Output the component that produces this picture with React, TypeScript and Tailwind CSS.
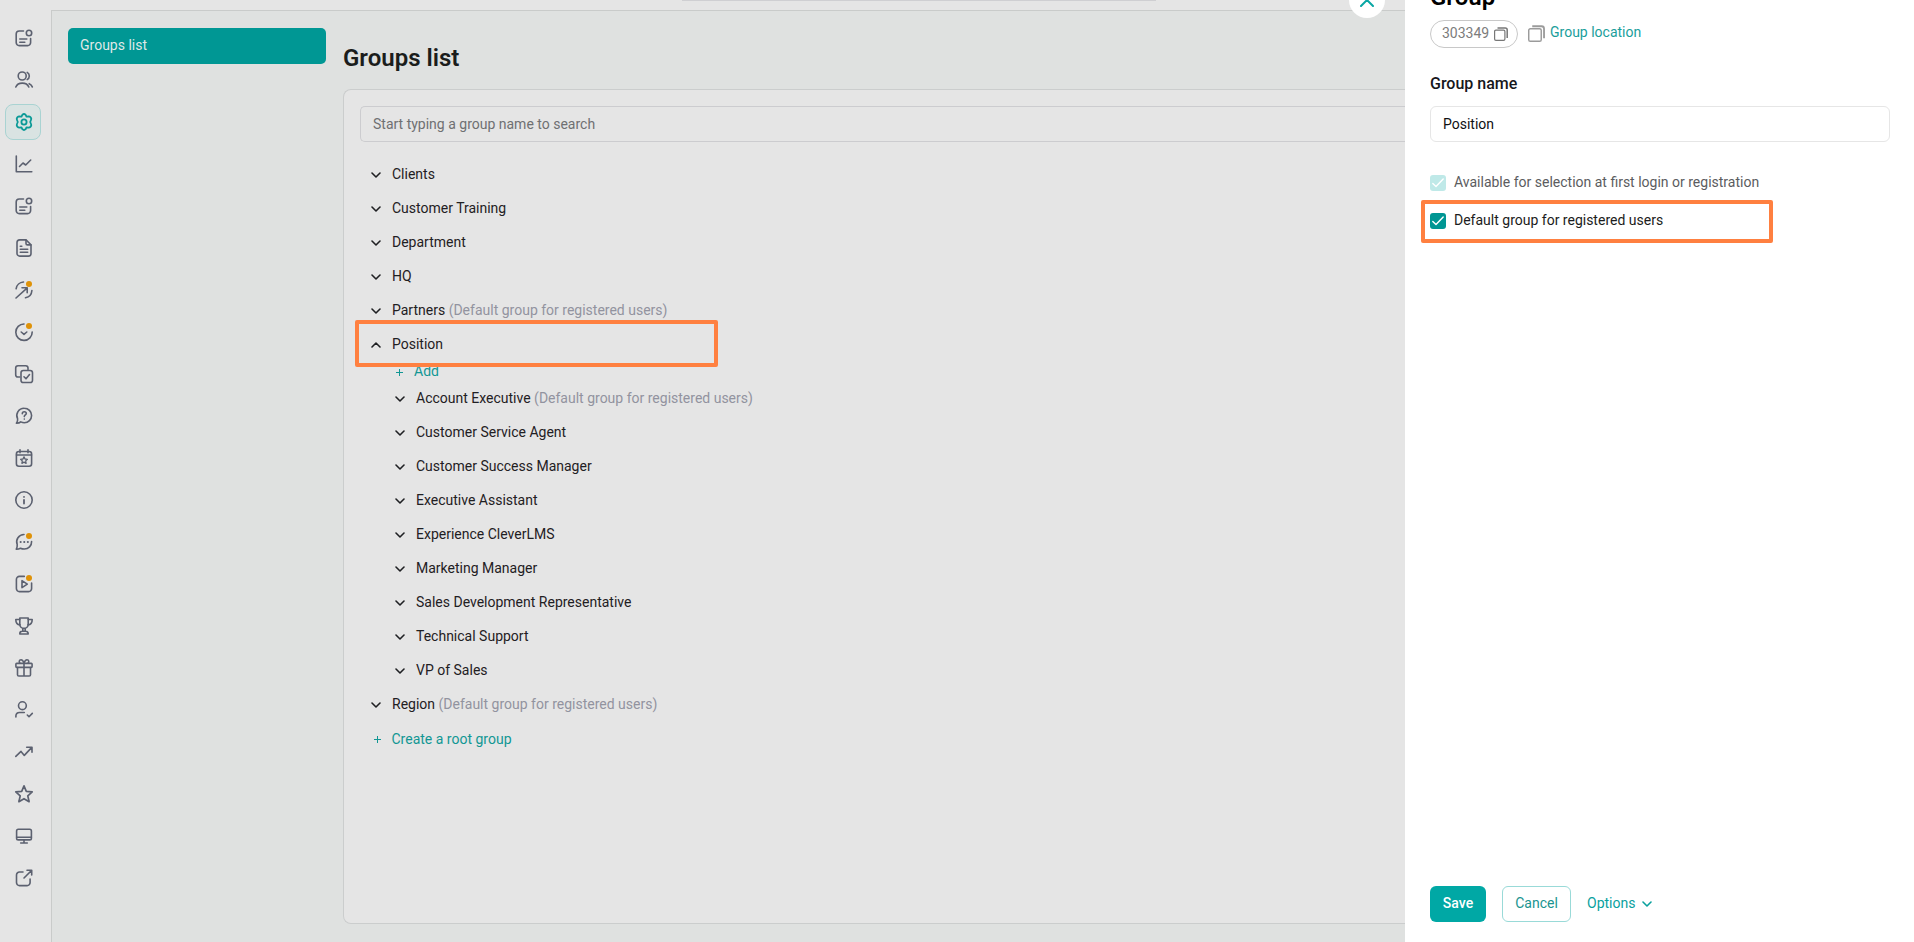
import React from "react";

type IconProps = { children: React.ReactNode; dot?: boolean };

function Icon({ children, dot }: IconProps) {
  return (
    <svg
      width="18"
      height="18"
      viewBox="0 0 18 18"
      fill="none"
      stroke="currentColor"
      strokeWidth="1.6"
      strokeLinecap="round"
      strokeLinejoin="round"
      className="overflow-visible"
    >
      {children}
      {dot && <circle cx="14" cy="3" r="3" fill="#df9208" stroke="none" />}
    </svg>
  );
}

const NoteIcon = () => (
  <Icon>
    <path d="M8.500 2H4.200A3 3 0 0 0 1.200 5v8.600a3 3 0 0 0 3 3h8.400a3 3 0 0 0 3-3V9.500" />
    <circle cx="14" cy="4" r="2.700" />
    <path d="M4.800 10h7M4.800 13.200h5" />
  </Icon>
);

const UsersIcon = () => (
  <Icon>
    <circle cx="7.200" cy="5" r="4" />
    <path d="M12.200 1.400c2.800 1.600 2.800 5.600 0 7.200" />
    <path d="M.8 16c1-2.400 3.600-3.900 6.500-3.900s5.500 1.500 6.500 3.900" />
    <path d="M14.200 12.700c1.400.6 2.500 1.700 3.100 3.200" />
  </Icon>
);

const GearIcon = () => (
  <Icon>
    <path
      strokeWidth="1.800"
      d="M7.300 1.800Q9 .3 10.700 1.800L11.500 3.600 13.600 3.400Q16 3.600 16.300 5.800 16.300 6.500 15.200 9 16.300 11.500 16.300 12.200 16 14.400 13.600 14.600L11.500 14.400 10.700 16.200Q9 17.700 7.300 16.200L6.500 14.400 4.400 14.600Q2 14.400 1.700 12.200 1.700 11.500 2.800 9 1.700 6.500 1.700 5.800 2 3.600 4.400 3.400L6.500 3.600Z"
    />
    <circle cx="9" cy="9" r="2.600" strokeWidth="1.800" />
  </Icon>
);

const ChartIcon = () => (
  <Icon>
    <path d="M1.300 1v15.700h15.500" />
    <path d="M4.500 11.500 8 8l2.700 2 5-5" />
  </Icon>
);

const DocumentIcon = () => (
  <Icon>
    <path d="M11 .9H4.700A2.700 2.700 0 0 0 2 3.600v10.800a2.700 2.700 0 0 0 2.700 2.700h8.600a2.700 2.700 0 0 0 2.700-2.700V5.800Z" />
    <path d="M11 1v3.400a1.500 1.500 0 0 0 1.500 1.500h3.400" />
    <path d="M5.300 7.200h1.500M5.300 10.200h7.400M5.300 13.300h7.400" />
  </Icon>
);

const TargetIcon = () => (
  <Icon dot>
    <path d="M1.100 7.800A8 8 0 0 1 8.500 1M16.900 9.500a8 8 0 0 1-6.400 7.300" />
    <path d="M1 17 12 7.200M7 6.800h5.200v5" />
  </Icon>
);

const CheckCircleIcon = () => (
  <Icon dot>
    <path d="M9 1a8.200 8.200 0 1 0 8.200 8" />
    <path d="M6.200 9 9 11.300 11.800 9" />
  </Icon>
);

const CopyCheckIcon = () => (
  <Icon>
    <path d="M4.700 12H3A2.300 2.300 0 0 1 .7 9.700V3A2.300 2.300 0 0 1 3 .7h7.700A2.300 2.300 0 0 1 13 3v1.500" />
    <rect x="6" y="5.500" width="11.500" height="12" rx="2.300" />
    <path d="m9 11.800 2 2 3.500-4.200" />
  </Icon>
);

const HelpIcon = () => (
  <Icon>
    <path d="M9.300 1.200a7.300 7.300 0 1 1 0 14.600c-1.600 0-2.500-.4-3.500-.9-1 .9-2.600 1.300-4.400 1.300 1-1.200 1.400-2.700 1.200-4.400A7.300 7.300 0 0 1 9.300 1.200Z" />
    <path d="M7.300 6.700c0-1.200.9-1.900 2-1.900s2 .7 2 1.800c0 1.300-2 1.500-2 3M9.300 12v.1" />
  </Icon>
);

const CalendarIcon = () => (
  <Icon>
    <rect x="1.400" y="2.500" width="15.200" height="14.700" rx="2.500" />
    <path d="M1.500 6h15M5 .8v3M13 .8v3" />
    <path
      strokeWidth="1.300"
      d="m9 7.900 1 2.100 2.400.3-1.700 1.600.4 2.400L9 13.200l-2.100 1.100.4-2.400-1.700-1.600L8 10Z"
    />
  </Icon>
);

const InfoIcon = () => (
  <Icon>
    <circle cx="9" cy="9" r="8.200" />
    <path d="M9 8.800v3.700M9 5.800v.1" strokeWidth="1.800" />
  </Icon>
);

const ChatIcon = () => (
  <Icon dot>
    <path d="M9 1.500A7.300 7.300 0 0 0 2.200 11.500c.2 1.800-.2 3.300-.9 4.700 1.800 0 3-.3 4.200-1 1 .5 2.200.8 3.800.8a7.200 7.200 0 0 0 7.300-7.500" />
    <path d="M5.600 9h.1M9.200 9h.1M12.800 9h.1" strokeWidth="2" />
  </Icon>
);

const VideoIcon = () => (
  <Icon dot>
    <path d="M9.300 1.400H4.400a3 3 0 0 0-3 3v9.200a3 3 0 0 0 3 3h9.200a3 3 0 0 0 3-3V8" />
    <path d="M7 5.700v7l5.300-3.500Z" />
  </Icon>
);

const TrophyIcon = () => (
  <Icon>
    <path d="M4.800 1h8.400v6.200a4.200 4.200 0 0 1-8.400 0Z" />
    <path d="M4.700 2.500H.8c0 3.600 1.200 5.200 4.200 5.400M13.300 2.500h3.900c0 3.600-1.200 5.200-4.200 5.400M7.800 11.500v2.700M10.200 11.500v2.700M4.800 17c0-1.900.8-2.800 2.400-2.800h3.600c1.600 0 2.400.9 2.400 2.800Z" />
  </Icon>
);

const GiftIcon = () => (
  <Icon>
    <rect x=".9" y="4.400" width="16.200" height="4" rx=".8" />
    <path d="M2.500 8.500v7.200c0 .8.500 1.300 1.300 1.300h10.400c.8 0 1.300-.5 1.300-1.300V8.500M9 4.400V17" />
    <path d="M9 4.200C8.300 2 7.300.8 6 .8 4 .8 3.600 3.500 5.200 4.200M9 4.200C9.700 2 10.700.8 12 .8c2 0 2.400 2.700.8 3.400" />
  </Icon>
);

const UserCheckIcon = () => (
  <Icon>
    <circle cx="7.400" cy="4.700" r="3.900" />
    <path d="M.9 16v-1.200a3.600 3.600 0 0 1 3.600-3.300h4.800" />
    <path d="m12.300 14 1.700 1.700 3.300-3.300" />
  </Icon>
);

const TrendIcon = () => (
  <Icon>
    <path d="m.8 13.400 5.200-5 3.300 4 7.500-8M11.700 4.200H17v5" />
  </Icon>
);

const StarIcon = () => (
  <Icon>
    <path
      strokeWidth="1.700"
      d="m9 .9 2.300 5.400 5.900.6-4.400 4 1.300 5.800L9 13.700l-5.100 3 1.300-5.800-4.400-4 5.900-.6Z"
    />
  </Icon>
);

const MonitorIcon = () => (
  <Icon>
    <rect x="1.600" y="2.300" width="14.800" height="10.600" rx="1.700" />
    <path d="M1.700 10.300h14.600M9 13v2.800M5.700 16h6.600" />
  </Icon>
);

const ExternalIcon = () => (
  <Icon>
    <path d="M8 3H4.500a3 3 0 0 0-3 3v7.600a3 3 0 0 0 3 3h7.600a3 3 0 0 0 3-3V10" />
    <path d="m9 9 7.500-7.500M12 1.200h4.700v4.700" />
  </Icon>
);

const navIcons = [
  NoteIcon, UsersIcon, GearIcon, ChartIcon, NoteIcon, DocumentIcon, TargetIcon,
  CheckCircleIcon, CopyCheckIcon, HelpIcon, CalendarIcon, InfoIcon, ChatIcon,
  VideoIcon, TrophyIcon, GiftIcon, UserCheckIcon, TrendIcon, StarIcon,
  MonitorIcon, ExternalIcon,
];

function Sidebar() {
  return (
    <nav className="flex w-[51px] shrink-0 flex-col gap-1.5 pt-5 pl-[5px] text-[#5c6170]">
      {navIcons.map((NavIcon, i) => (
        <div
          key={i}
          className={
            i === 2
              ? "flex h-9 w-9 items-center justify-center rounded-lg border border-[#a9d3d2] bg-[#d9e3e2] pl-0.5 text-[#0b9a97]"
              : "flex h-9 w-9 items-center justify-center pl-0.5"
          }
        >
          <NavIcon />
        </div>
      ))}
    </nav>
  );
}

function Chevron({ up }: { up?: boolean }) {
  return (
    <svg width="10" height="6" viewBox="0 0 10 6" fill="none" stroke="currentColor" strokeWidth="1.600" strokeLinecap="round" strokeLinejoin="round">
      <path d={up ? "m1 5 4-4 4 4" : "m1 1 4 4 4-4"} />
    </svg>
  );
}

function Plus() {
  return (
    <svg width="7" height="7" viewBox="0 0 7 7" stroke="currentColor" strokeWidth="1">
      <path d="M3.500 0v7M0 3.500h7" />
    </svg>
  );
}

function Stack({ size, className }: { size: number; className: string }) {
  return (
    <svg width={size} height={size} viewBox="0 0 14 14" fill="none" stroke="currentColor" className={className}>
      <rect x=".6" y="3.100" width="10.300" height="10.300" rx="1.300" strokeWidth="1.200" />
      <path d="M3.500 1h7.700A2 2 0 0 1 13.200 3v8" strokeWidth="1.500" />
    </svg>
  );
}

type Group = { name: string; isDefault?: boolean; open?: boolean };

function GroupRow({ name, isDefault, open }: Group) {
  return (
    <div className="flex h-[34px] items-center text-sm text-[#1f2023]">
      <span className="flex w-[21px] pt-0.5">
        <Chevron up={open} />
      </span>
      <span>
        {name}
        {isDefault && <span className="text-[#92939f]"> (Default group for registered users)</span>}
      </span>
    </div>
  );
}

const before: Group[] = [
  { name: "Clients" },
  { name: "Customer Training" },
  { name: "Department" },
  { name: "HQ" },
  { name: "Partners", isDefault: true },
];

const children: Group[] = [
  { name: "Account Executive", isDefault: true },
  { name: "Customer Service Agent" },
  { name: "Customer Success Manager" },
  { name: "Executive Assistant" },
  { name: "Experience CleverLMS" },
  { name: "Marketing Manager" },
  { name: "Sales Development Representative" },
  { name: "Technical Support" },
  { name: "VP of Sales" },
];

function GroupsCard() {
  return (
    <section className="mt-[21px] h-[835px] rounded-l-lg border border-r-0 border-[#cbcdcd] bg-[#e5e5e5] pt-4 pl-4">
      <div className="flex h-9 items-center rounded-l-[5px] border border-r-0 border-[#cccccf] pl-3 text-sm text-[#6f7072]">
        Start typing a group name to search
      </div>
      <div className="flex flex-col pt-[15px] pl-[11px]">
        {before.map((g) => (
          <GroupRow key={g.name} {...g} />
        ))}
        <div className="relative">
          <GroupRow name="Position" open />
          <div className="absolute -top-[7px] -left-4 z-10 h-[47px] w-[363px] rounded-[2px] border-4 border-[#ff8040]" />
        </div>
        <div className="flex flex-col pl-6">
          <div className="flex h-5 items-center pl-px text-sm text-[#129794]">
            <span className="flex w-[18px] pt-0.5">
              <Plus />
            </span>
            Add
          </div>
          {children.map((g) => (
            <GroupRow key={g.name} {...g} />
          ))}
        </div>
        <GroupRow name="Region" isDefault />
        <div className="flex h-9 items-center pl-[2.500px] text-sm text-[#129794]">
          <span className="flex w-[18px] pt-px">
            <Plus />
          </span>
          Create a root group
        </div>
      </div>
    </section>
  );
}

function Checkbox({ label, disabled }: { label: string; disabled?: boolean }) {
  return (
    <div className="flex h-[38px] items-center gap-2 text-sm">
      <span className={disabled ? "mt-0.5 flex h-4 w-4 items-center justify-center rounded-[3px] bg-[#bfe9e8]" : "mt-0.5 flex h-4 w-4 items-center justify-center rounded-[3px] bg-[#009693]"}>
        <svg width="14" height="12" viewBox="0 0 14 12" fill="none" stroke="#fff" strokeWidth="1.400" strokeLinecap="round" strokeLinejoin="round">
          <path d="M1.800 6.500 5 9.600l7.200-7.700" />
        </svg>
      </span>
      <span className={disabled ? "text-[#5b5c60]" : "text-[#1b1c20]"}>{label}</span>
    </div>
  );
}

function DetailPanel() {
  return (
    <aside className="relative flex w-[509px] shrink-0 flex-col bg-white pr-6 pl-[25px]">
      <button className="absolute -top-[18px] -left-14 flex h-9 w-9 items-center justify-center rounded-full bg-white text-[#0aa7a4]">
        <svg width="14" height="14" viewBox="0 0 14 14" stroke="currentColor" strokeWidth="2" strokeLinecap="round">
          <path d="m1 1 12 12M13 1 1 13" />
        </svg>
      </button>
      <h2 className="-mt-[19px] h-[39px] text-2xl leading-8 font-semibold text-black">Group</h2>
      <div className="flex h-7 items-center">
        <div className="flex h-7 w-[88px] items-center gap-[5px] rounded-full border border-[#c8c8c8] pl-[11px] text-sm text-[#7c7c7c]">
          <span className="-mt-0.5">303349</span>
          <Stack size={14} className="text-[#777777]" />
        </div>
        <Stack size={17} className="-mt-0.5 ml-2.5 text-[#9b9b9b]" />
        <span className="-mt-1 ml-[5px] text-sm text-[#1a9e9b]">Group location</span>
      </div>
      <label className="mt-6 text-base leading-6 font-medium text-[#16171b]">Group name</label>
      <div className="mt-2.5 flex h-9 items-center rounded-md border border-[#e6e6e6] pl-3 text-sm text-[#0f1013]">
        Position
      </div>
      <div className="mt-[21px] flex flex-col">
        <Checkbox label="Available for selection at first login or registration" disabled />
        <div className="relative">
          <Checkbox label="Default group for registered users" />
          <div className="absolute -top-px -left-[9px] h-[43px] w-[352px] rounded-[2px] border-4 border-[#ff8040]" />
        </div>
      </div>
      <div className="mt-auto mb-5 flex h-9 items-center text-sm">
        <button className="h-9 w-14 rounded-md bg-[#00a8a5] pb-0.5 font-medium text-white">Save</button>
        <button className="ml-4 h-9 w-[69px] rounded-md border border-[#99dad8] pb-0.5 text-[#1a9490]">Cancel</button>
        <button className="ml-4 flex items-center gap-[7px] text-[#0aa19e]">
          <span className="-mt-0.5">Options</span>
          <Chevron />
        </button>
      </div>
    </aside>
  );
}

export default function App() {
  return (
    <div className="flex h-[942px] w-[1914px] overflow-hidden bg-[#e5e5e5] font-['Roboto',sans-serif]">
      <Sidebar />
      <div className="flex min-w-0 flex-1 flex-col">
        <div className="h-2.5 shrink-0 pl-[631px]">
          <div className="h-px w-[474px] bg-[#cfcfd2]" />
        </div>
        <main className="flex flex-1 border-t border-l border-[#c9cbca] bg-[#dfe1e0]">
          <div className="w-[291px] shrink-0 pt-[17px] pl-4">
            <div className="flex h-9 w-[258px] items-center rounded-[5px] bg-[#009794] pb-0.5 pl-3 text-sm text-[#dfe8e7]">
              Groups list
            </div>
          </div>
          <div className="min-w-0 flex-1 pt-[25px]">
            <h1 className="h-8 text-2xl leading-[44px] font-semibold text-[#1b1d1c]">Groups list</h1>
            <GroupsCard />
          </div>
        </main>
      </div>
      <DetailPanel />
    </div>
  );
}
